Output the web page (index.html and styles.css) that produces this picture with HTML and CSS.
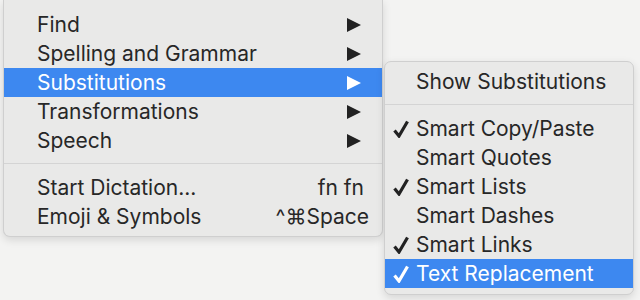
FILE: index.html
```html
<!DOCTYPE html>
<html lang="en">
<head>
    <meta charset="UTF-8">
    <title>Substitutions menu</title>
    <link rel="stylesheet" href="styles.css">
</head>
<body>

<div class="menu main-menu">
    <div class="item"><span class="label">Find</span><svg class="arrow" viewBox="0 0 14 14"><polygon points="0,0 14,7 0,14"/></svg></div>
    <div class="item"><span class="label">Spelling and Grammar</span><svg class="arrow" viewBox="0 0 14 14"><polygon points="0,0 14,7 0,14"/></svg></div>
    <div class="item active"><span class="label">Substitutions</span><svg class="arrow" viewBox="0 0 14 14"><polygon points="0,0 14,7 0,14"/></svg></div>
    <div class="item"><span class="label">Transformations</span><svg class="arrow" viewBox="0 0 14 14"><polygon points="0,0 14,7 0,14"/></svg></div>
    <div class="item"><span class="label">Speech</span><svg class="arrow" viewBox="0 0 14 14"><polygon points="0,0 14,7 0,14"/></svg></div>
    <div class="separator"></div>
    <div class="item"><span class="label">Start Dictation...</span><span class="shortcut fn">fn fn</span></div>
    <div class="item"><span class="label">Emoji &amp; Symbols</span><span class="shortcut">^⌘Space</span></div>
</div>

<div class="menu sub-menu">
    <div class="item"><span class="check"></span><span class="label">Show Substitutions</span></div>
    <div class="separator"></div>
    <div class="item"><span class="check"><svg viewBox="0 0 16 18"><path d="M1.5 10.5 L6 16 L14.5 1.5"/></svg></span><span class="label">Smart Copy/Paste</span></div>
    <div class="item"><span class="check"></span><span class="label">Smart Quotes</span></div>
    <div class="item"><span class="check"><svg viewBox="0 0 16 18"><path d="M1.5 10.5 L6 16 L14.5 1.5"/></svg></span><span class="label">Smart Lists</span></div>
    <div class="item"><span class="check"></span><span class="label">Smart Dashes</span></div>
    <div class="item"><span class="check"><svg viewBox="0 0 16 18"><path d="M1.5 10.5 L6 16 L14.5 1.5"/></svg></span><span class="label">Smart Links</span></div>
    <div class="item active"><span class="check"><svg viewBox="0 0 16 18"><path d="M1.5 10.5 L6 16 L14.5 1.5"/></svg></span><span class="label">Text Replacement</span></div>
</div>

</body>
</html>
```

FILE: styles.css
```css
body {
    margin: 0;
    width: 640px;
    height: 300px;
    overflow: hidden;
    display: flex;
    align-items: flex-start;
    background: #f3f3f2;
    font-family: Inter, "Noto Sans", "DejaVu Sans", sans-serif;
    font-size: 21px;
    color: #272727;
}
.menu {
    background-color: #e9e9e8;
    border: 1px solid #cfcfcf;
    box-shadow: 0 3px 8px rgba(0, 0, 0, 0.12);
}
.main-menu {
    width: 378px;
    margin-left: 3px;
    padding: 10px 0 5px 0;
    border-top: none;
    border-radius: 0 0 7px 7px;
}
.sub-menu {
    width: 248px;
    margin-top: 61px;
    margin-left: 1px;
    padding: 5px 0 6px 0;
    border-radius: 7px;
}
.item {
    height: 29px;
    display: flex;
    align-items: center;
    line-height: 29px;
}
.main-menu .item {
    padding: 0 21px 0 33px;
}
.item .label {
    flex: 1;
}
.item.active {
    background-color: #3d88f0;
    color: white;
}
.arrow {
    width: 14px;
    height: 14px;
    fill: #222;
}
.active .arrow {
    fill: white;
}
.shortcut {
    margin-right: -8px;
}
.shortcut.fn {
    margin-right: -3px;
}
.separator {
    height: 1px;
    background-color: #d4d4d4;
    margin: 8px 0 9px 0;
}
.sub-menu .item {
    padding-left: 8px;
}
.check {
    width: 23px;
    height: 18px;
    display: flex;
}
.check svg {
    width: 16px;
    height: 18px;
    fill: none;
    stroke: #222;
    stroke-width: 3.2;
}
.active .check svg {
    stroke: white;
}
```
